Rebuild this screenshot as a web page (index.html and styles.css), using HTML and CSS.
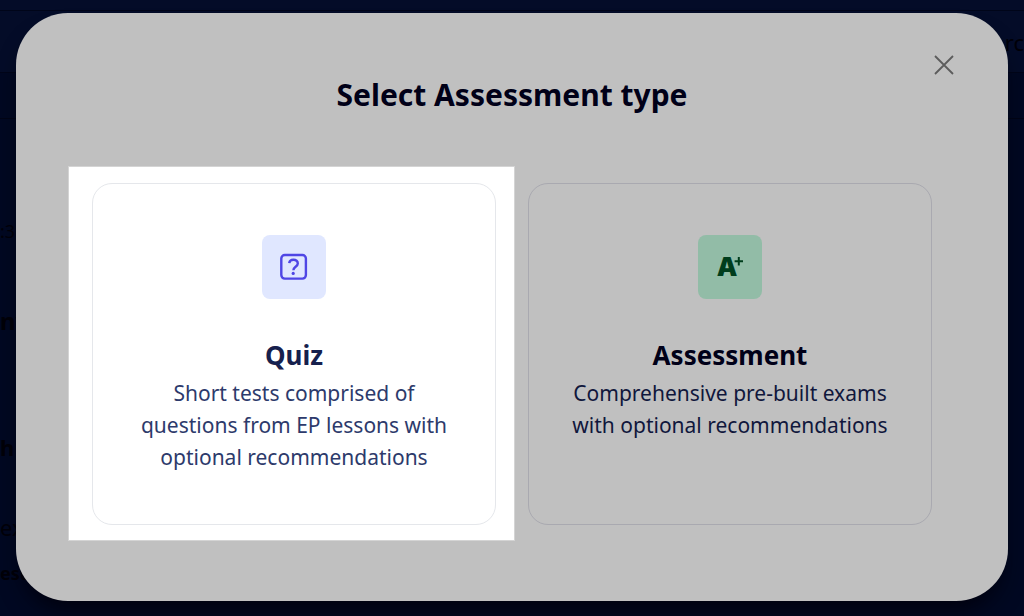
FILE: index.html
```
<!DOCTYPE html>
<html lang="en">
<head>
<meta charset="utf-8">
<meta name="viewport" content="width=device-width, initial-scale=1">
<title>Select Assessment type</title>
<link rel="stylesheet" href="styles.css">
</head>
<body>
<div class="backdrop" aria-hidden="true">
  <div class="topbar"><span>rc</span></div>
  <div class="subbar"></div>
  <div class="side">
    <span class="small">:3.</span>
    <b class="name">ny</b>
    <b class="heading">h</b>
    <span class="text">ex</span>
    <b class="result">esu</b>
  </div>
</div>
<main class="modal" role="dialog" aria-labelledby="title">
  <header class="modal-header">
    <button class="close" type="button" aria-label="Close">
      <svg viewBox="0 0 20 20" width="20" height="20"><path d="M1 1L19 19M19 1L1 19" stroke="currentColor" stroke-width="1.8" fill="none"/></svg>
    </button>
    <h1 id="title" class="title">Select Assessment type</h1>
  </header>
  <div class="options">
    <button class="card active" type="button">
      <span class="tile tile-quiz">
        <svg viewBox="0 0 64 64" width="64" height="64" fill="none" stroke="#4f46e5" stroke-width="2.4" stroke-linecap="round" stroke-linejoin="round">
          <rect x="19.300" y="20" width="24.600" height="23.600" rx="3.500"/>
          <path d="M27.200 28.200C27.500 25.900 29.200 24.700 31.400 24.700C34 24.700 35.800 26.300 35.800 28.500C35.800 31.700 31.400 31.900 31.400 35.200" stroke-linecap="butt"/>
          <circle cx="31.200" cy="38.400" r="1.600" fill="#4f46e5" stroke="none"/>
        </svg>
      </span>
      <span class="card-title">Quiz</span>
      <span class="card-text">Short tests comprised of questions from EP lessons with optional recommendations</span>
    </button>
    <button class="card" type="button">
      <span class="tile tile-exam">
        <svg viewBox="0 0 64 64" width="64" height="64">
          <text x="29" y="41" text-anchor="middle" class="grade">A</text>
          <path d="M40.800 22V30.400M36.600 26.200H45" stroke="#003d1c" stroke-width="2" fill="none"/>
        </svg>
      </span>
      <span class="card-title">Assessment</span>
      <span class="card-text">Comprehensive pre-built exams with optional recommendations</span>
    </button>
  </div>
</main>
</body>
</html>
```
FILE: styles.css
```
* {
  box-sizing: border-box;
}

body {
  margin: 0;
  min-height: 100vh;
  padding: 13px 16px 15px;
  background: #000822;
  color: #000018;
  font-family: "Segoe UI", "Noto Sans", "Open Sans", sans-serif;
  position: relative;
  overflow: hidden;
}

.backdrop {
  position: absolute;
  inset: 0;
  padding-top: 10px;
  background: linear-gradient(#040c28 0, #040c28 72px, #000822 73px, #000822 100%);
  color: #000008;
}

.topbar {
  display: flex;
  align-items: center;
  justify-content: flex-end;
  height: 63px;
  border-top: 1px solid #000519;
  border-bottom: 1px solid #000519;
  font-size: 22px;
}

.subbar {
  height: 46px;
  border-bottom: 1px solid #000416;
}

.side {
  display: flex;
  flex-direction: column;
  line-height: 32px;
  padding-top: 96px;
}

.small {
  font-size: 18px;
}

.name {
  font-size: 24px;
  margin-top: 58px;
}

.heading {
  font-size: 22px;
  margin-top: 94px;
}

.text {
  font-size: 22px;
  margin-top: 48px;
}

.result {
  font-size: 18px;
  margin-top: 14px;
}

.modal {
  position: relative;
  isolation: isolate;
  min-height: calc(100vh - 28px);
  padding: 36px 76px 76px;
  border-radius: 52px;
  background: #c0c0c0;
  box-shadow: 0 16px 24px -8px #00000c;
}

.modal-header {
  display: flex;
  flex-direction: column;
  margin-bottom: 68px;
}

.close {
  align-self: flex-end;
  display: flex;
  margin: 6px -22px 0 0;
  padding: 0;
  border: 0;
  background: none;
  color: #5c5c5c;
}

.title {
  margin: 0;
  font-size: 30px;
  line-height: 40px;
  font-weight: 700;
  text-align: center;
}

.options {
  display: grid;
  grid-template-columns: 1fr 1fr;
  gap: 32px;
  isolation: isolate;
}

.card {
  display: flex;
  flex-direction: column;
  align-items: center;
  min-height: 341px;
  padding: 51px 36px;
  border: 1px solid #a9a9b0;
  border-radius: 20px;
  background: none;
  color: #000018;
  font: inherit;
  position: relative;
}

.card.active {
  border-color: #e5e7eb;
  background: #fff;
  color: #16204d;
}

.card.active::before {
  content: "";
  position: absolute;
  inset: -18px -20px -17px -25px;
  z-index: -1;
  border: 1px solid #d4d4d4;
  background: #fff;
}

.tile {
  display: flex;
  border-radius: 8px;
  margin-bottom: 36px;
}

.tile-quiz {
  background: #e0e7ff;
}

.tile-exam {
  background: #92bca7;
}

.grade {
  font-family: Inter, sans-serif;
  font-size: 26px;
  font-weight: 900;
  fill: #003d1c;
}

.card-title {
  font-size: 26px;
  line-height: 40px;
  font-weight: 700;
  margin-bottom: 2px;
}

.card-text {
  font-size: 21px;
  line-height: 32px;
  color: #10173c;
}

.active .card-text {
  color: #2d3a6b;
}
```
